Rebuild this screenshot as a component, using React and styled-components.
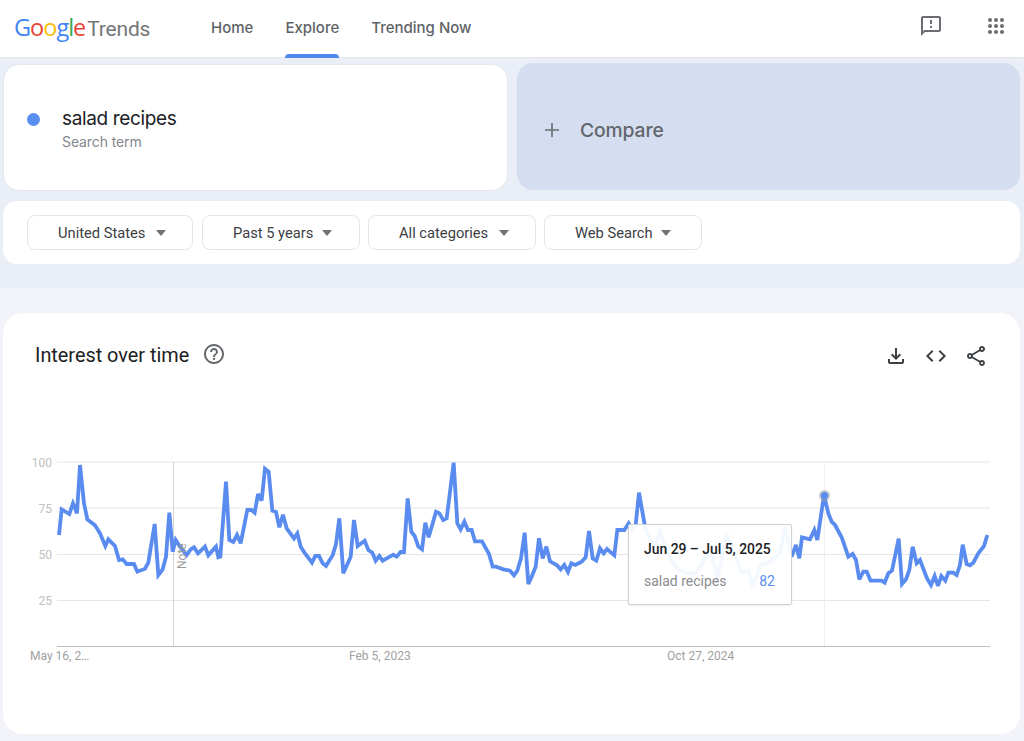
import React from "react";
import styled, { createGlobalStyle } from "styled-components";

const Global = createGlobalStyle`
  html, body { margin: 0; padding: 0; background: #f1f3f9; }
  body { font-family: "Roboto", "Liberation Sans", sans-serif; width: 1024px; height: 741px; overflow: hidden; }
  * { box-sizing: border-box; }
`;

const Page = styled.div`
  width: 1024px;
  height: 741px;
  display: flex;
  flex-direction: column;
  overflow: hidden;
`;

const Header = styled.header`
  height: 58px;
  flex: none;
  background: #fff;
  border-bottom: 1px solid #e3e5ea;
  display: flex;
  align-items: stretch;
  padding: 0 16px 0 14px;
`;

const Logo = styled.div`
  display: flex;
  align-items: baseline;
  width: 197px;
  padding-top: 13px;
  font-family: "Open Sans", sans-serif;
  font-size: 23.5px;
  line-height: 28px;
  letter-spacing: -1px;
`;

const LogoLetter = styled.span`
  color: ${(p) => p.$c};
`;

const LogoWord = styled.span`
  color: #737678;
  font-family: "Roboto", sans-serif;
  font-size: 21px;
  letter-spacing: -0.2px;
  margin-left: 2px;
`;

const Nav = styled.nav`
  display: flex;
  gap: 32px;
  flex: 1;
`;

const NavItem = styled.a`
  position: relative;
  display: block;
  padding-top: 19px;
  font-family: "Inter", sans-serif;
  font-size: 15px;
  line-height: 18px;
  letter-spacing: 0;
  color: #5f6368;
  font-weight: 500;
  ${(p) =>
    p.$active &&
    `&::after {
      content: "";
      position: absolute;
      left: 0; right: 0; bottom: -1px;
      height: 4px;
      border-radius: 4px 4px 0 0;
      background: #4f86ec;
    }`}
`;

const HeaderIcons = styled.div`
  display: flex;
  align-items: flex-start;
  padding-top: 14px;
  gap: 41px;
`;

const TopBand = styled.section`
  flex: none;
  height: 230px;
  background: #eaeef7;
  padding: 5px 4px 0 3px;
  display: flex;
  flex-direction: column;
  gap: 10px;
`;

const SearchRow = styled.div`
  display: grid;
  grid-template-columns: 505px 503px;
  gap: 9px;
  height: 128px;
`;

const TermCard = styled.div`
  background: #fff;
  border-radius: 16px;
  border: 1px solid #e4e7ee;
  margin-top: 1px;
  display: flex;
  align-items: center;
  padding: 2px 0 0 23px;
  gap: 22px;
`;

const TermDot = styled.span`
  width: 13px;
  height: 13px;
  border-radius: 50%;
  background: #5a8ff2;
  flex: none;
  margin-bottom: 18px;
`;

const TermText = styled.div`
  display: flex;
  flex-direction: column;
  gap: 2px;
`;

const TermTitle = styled.div`
  font-family: "Inter", sans-serif;
  font-size: 19px;
  line-height: 24px;
  letter-spacing: -0.35px;
  color: #202124;
`;

const TermSub = styled.div`
  font-family: "Inter", sans-serif;
  font-size: 14px;
  line-height: 18px;
  letter-spacing: -0.1px;
  color: #85888c;
`;

const CompareCard = styled.div`
  background: #d5ddf0;
  border-radius: 16px;
  margin-bottom: 1px;
  display: flex;
  align-items: center;
  padding: 7px 0 0 27px;
  gap: 20px;
  color: #62666b;
  font-family: "Inter", sans-serif;
  font-size: 19.3px;
  letter-spacing: -0.1px;
  font-weight: 500;
`;

const FilterCard = styled.div`
  height: 63px;
  background: #fff;
  border-radius: 14px;
  display: flex;
  align-items: flex-start;
  padding: 14px 0 0 24px;
  gap: 8px;
`;

const Chip = styled.div`
  width: ${(p) => p.$w}px;
  height: 35px;
  border: 1px solid #e3e5e9;
  border-radius: 8px;
  display: flex;
  align-items: center;
  padding-left: 30px;
  gap: ${(p) => p.$gap}px;
  font-family: "Roboto", sans-serif;
  font-size: 14.7px;
  color: #3c4043;
  &:first-child {
    margin-right: 1px;
  }
`;

const Caret = styled.span`
  width: 0;
  height: 0;
  border-left: 5px solid transparent;
  border-right: 5px solid transparent;
  border-top: 6px solid #6f7276;
`;

const Lower = styled.section`
  flex: 1;
  background: #f1f3f9;
  padding: 25px 4px 0 3px;
`;

const ChartCard = styled.article`
  position: relative;
  height: 421px;
  background: #fff;
  border-radius: 20px;
`;

const CardHead = styled.div`
  height: 127px;
  display: flex;
  align-items: flex-start;
  padding: 29px 32px 0 32px;
`;

const CardTitle = styled.h2`
  margin: 0;
  font-family: "Roboto", sans-serif;
  font-weight: 400;
  font-size: 19.85px;
  line-height: 28px;
  color: #202124;
`;

const HelpWrap = styled.span`
  display: flex;
  margin: 0 0 0 13px;
`;

const Actions = styled.div`
  margin-left: auto;
  display: flex;
  gap: 16px;
  padding-top: 2px;
`;

const ChartSvg = styled.svg`
  display: block;
`;

const Tip = styled.div`
  position: absolute;
  left: 625px;
  top: 211px;
  width: 164px;
  height: 81px;
  background: rgba(255, 255, 255, 0.93);
  border: 1px solid #cfd0d2;
  border-radius: 2px;
  box-shadow: 0 1px 2px rgba(0, 0, 0, 0.08);
  padding: 15px 16px 0 15px;
  font-family: "Roboto", sans-serif;
`;

const TipDate = styled.div`
  font-size: 13.9px;
  line-height: 18px;
  font-weight: 500;
  color: #202124;
`;

const TipRow = styled.div`
  margin-top: 14px;
  display: flex;
  justify-content: space-between;
  font-size: 14px;
  line-height: 18px;
  color: #8a8c8f;
`;

const TipValue = styled.span`
  color: #5a8ff2;
`;

const Icon = ({ d, size = 24, color = "#5f6368" }) => (
  <svg width={size} height={size} viewBox="0 0 24 24" fill={color}>
    <path d={d} />
  </svg>
);

const Apps = () => (
  <svg width="24" height="24" viewBox="0 0 24 24" fill="#6a6d71">
    {[6, 12, 18].flatMap((y) =>
      [6, 12, 18].map((x) => <circle key={x + "-" + y} cx={x} cy={y} r="2" />)
    )}
  </svg>
);

const P = {
  feedback: "M20 2H4c-1.1 0-1.99.9-1.99 2L2 22l4-4h14c1.1 0 2-.9 2-2V4c0-1.1-.9-2-2-2zm0 14H5.17L4 17.17V4h16v12zM11 12h2v2h-2zm0-6h2v4h-2z",
  down: "M18 15v3H6v-3H4v3c0 1.1.9 2 2 2h12c1.1 0 2-.9 2-2v-3h-2zm-1-4l-1.41-1.41L13 12.17V4h-2v8.17L8.41 9.59 7 11l5 5 5-5z",
  code: "M9.4 16.6L4.8 12l4.6-4.6L8 6l-6 6 6 6 1.4-1.4zm5.2 0l4.6-4.6-4.6-4.6L16 6l6 6-6 6-1.4-1.4z",
  share: "M18 16.08c-.76 0-1.44.3-1.96.77L8.91 12.7c.05-.23.09-.46.09-.7s-.04-.47-.09-.7l7.05-4.11c.54.5 1.25.81 2.04.81 1.66 0 3-1.34 3-3s-1.34-3-3-3-3 1.34-3 3c0 .24.04.47.09.7L8.04 9.81C7.5 9.31 6.79 9 6 9c-1.66 0-3 1.34-3 3s1.34 3 3 3c.79 0 1.5-.31 2.04-.81l7.12 4.16c-.05.21-.08.43-.08.65 0 1.61 1.31 2.92 2.92 2.92s2.92-1.31 2.92-2.92-1.31-2.92-2.92-2.92zM18 4c.55 0 1 .45 1 1s-.45 1-1 1-1-.45-1-1 .45-1 1-1zM6 13c-.55 0-1-.45-1-1s.45-1 1-1 1 .45 1 1-.45 1-1 1zm12 7.02c-.55 0-1-.45-1-1s.45-1 1-1 1 .45 1 1-.45 1-1 1z",
  help: "M11 18h2v-2h-2v2zm1-16C6.48 2 2 6.48 2 12s4.48 10 10 10 10-4.48 10-10S17.52 2 12 2zm0 18c-4.41 0-8-3.59-8-8s3.59-8 8-8 8 3.59 8 8-3.59 8-8 8zm0-14c-2.21 0-4 1.79-4 4h2c0-1.1.9-2 2-2s2 .9 2 2c0 2-3 1.75-3 5h2c0-2.25 3-2.5 3-5 0-2.21-1.79-4-4-4z",
};

const seg = (ox, oy, pts) => pts.map(([x, y]) => [ox + x / 3, oy + y / 3]);

const line = [
  ...seg(0, 450, [[177,255],[185,178],[208,192],[219,160],[231,190],[240,45],[252,160],[262,208],[285,226],[300,250],[316,288],[325,268],[345,288],[357,330],[368,328],[380,342],[402,342],[412,365],[435,356],[445,338],[464,222],[475,375],[488,358],[498,320],[508,188],[518,305],[527,270],[540,290],[560,315],[572,298],[582,292],[594,310],[615,290],[625,316],[648,290],[655,322],[661,320],[678,95],[688,270],[700,276],[711,255],[722,280],[742,180],[754,180],[764,188],[774,132],[785,152],[795,56],[806,65],[817,182],[828,186],[838,232],[849,194],[860,235],[882,265],[892,250],[902,290],[915,310],[936,338],[946,318],[957,318],[968,340],[978,348],[998,316],[1008,282],[1018,205]]),
  ...seg(340, 450, [[10,370],[32,320],[42,210],[53,288],[74,272],[85,300],[97,308],[107,332],[118,318],[128,332],[160,314],[170,320],[182,306],[192,306],[203,145],[214,245],[224,258],[235,290],[246,298],[256,218],[266,262],[288,185],[298,190],[310,210],[320,205],[341,38],[352,220],[362,238],[373,215],[384,240],[395,240],[405,274],[426,274],[447,312],[458,350],[468,350],[490,358],[510,362],[522,376],[532,362],[543,325],[554,248],[565,402],[575,380],[587,350],[597,265],[608,325],[619,290],[630,334],[650,345],[662,358],[673,345],[684,366],[694,340],[706,345],[725,335],[737,322],[747,243],[758,325],[769,332],[780,295],[791,310],[801,297],[823,316],[832,240],[853,240],[866,220],[877,240],[887,225],[897,128]]),
  ...seg(620, 510, [[75,50],[90,90],[105,105],[120,65],[135,110],[155,150],[170,175],[200,190],[225,190],[245,165],[260,130],[275,135],[292,205],[320,70],[345,140],[365,185],[385,180],[400,232],[420,165],[450,155],[480,130],[495,50],[515,140]]),
  ...seg(680, 450, [[348,285],[358,325],[366,262],[390,268],[403,240],[412,270],[432,135],[445,190],[455,215],[465,225],[485,262],[505,320],[518,312],[528,330],[538,388],[550,365],[560,365],[572,392],[605,392],[614,398],[625,370],[636,362],[656,266],[666,402],[678,388],[688,360],[698,290],[710,340],[720,330],[741,385],[753,405],[764,378],[774,408],[784,378],[796,392],[805,368],[820,368],[830,375],[840,345],[848,284],[860,342],[870,346],[880,338],[895,310],[912,288],[922,255]]),
];

const grid = [[462, "100"], [508, "75"], [554.5, "50"], [600.5, "25"]];

const google = [["G", "#4285f4"], ["o", "#ea4335"], ["o", "#fbbc05"], ["g", "#4285f4"], ["l", "#34a853"], ["e", "#ea4335"]];

const chips = [["United States", 166, 11], ["Past 5 years", 158, 9], ["All categories", 168, 11], ["Web Search", 158, 8]];

export default function App() {
  return (
    <Page>
      <Global />
      <Header>
        <Logo>
          {google.map(([l, c], i) => (
            <LogoLetter key={i} $c={c}>{l}</LogoLetter>
          ))}
          <LogoWord>Trends</LogoWord>
        </Logo>
        <Nav>
          <NavItem>Home</NavItem>
          <NavItem $active>Explore</NavItem>
          <NavItem>Trending Now</NavItem>
        </Nav>
        <HeaderIcons>
          <Icon d={P.feedback} color="#6a6d71" />
          <Apps />
        </HeaderIcons>
      </Header>
      <TopBand>
        <SearchRow>
          <TermCard>
            <TermDot />
            <TermText>
              <TermTitle>salad recipes</TermTitle>
              <TermSub>Search term</TermSub>
            </TermText>
          </TermCard>
          <CompareCard>
            <svg width="16" height="16" viewBox="0 0 16 16" stroke="#6a6e73" strokeWidth="1.6">
              <path d="M8 1v14M1 8h14" />
            </svg>
            Compare
          </CompareCard>
        </SearchRow>
        <FilterCard>
          {chips.map(([t, w, g]) => (
            <Chip key={t} $w={w} $gap={g}>
              {t}
              <Caret />
            </Chip>
          ))}
        </FilterCard>
      </TopBand>
      <Lower>
        <ChartCard>
          <CardHead>
            <CardTitle>Interest over time</CardTitle>
            <HelpWrap><Icon d={P.help} color="#66696d" /></HelpWrap>
            <Actions>
              <Icon d={P.down} color="#3c4043" />
              <Icon d={P.code} color="#3c4043" />
              <Icon d={P.share} color="#3c4043" />
            </Actions>
          </CardHead>
          <ChartSvg width="1017" height="294" viewBox="3 440 1017 294">
            {grid.map(([y, t]) => (
              <g key={t}>
                <line x1="57" x2="990" y1={y} y2={y} stroke="#e6e6e6" strokeWidth="1.2" />
                <text x="52" y={y + 4.5} textAnchor="end" fontFamily="Roboto, sans-serif" fontSize="12" fill="#c0c0c0">{t}</text>
              </g>
            ))}
            <line x1="57" x2="990" y1="646.5" y2="646.5" stroke="#bdbdbd" strokeWidth="1.2" />
            <line x1="173.5" x2="173.5" y1="462" y2="646" stroke="#d4d4d4" strokeWidth="1" />
            <line x1="824.5" x2="824.5" y1="462" y2="646" stroke="#f0f0f0" strokeWidth="1" />
            <polyline points={line.map((p) => p.join(",")).join(" ")} fill="none" stroke="#5a8cf0" strokeWidth="3.8" strokeLinejoin="miter" strokeMiterlimit="3" />
            <text transform="translate(186 569) rotate(-90)" fontFamily="Roboto, sans-serif" fontSize="12" fill="#9a9a9a">Note</text>
            <circle cx="824.5" cy="495.5" r="5.5" fill="#9e9e9e" opacity="0.55" />
            <circle cx="824.5" cy="495.5" r="3.6" fill="#5a8cf0" />
            <g fontFamily="Roboto, sans-serif" fontSize="12" fill="#a0a0a0">
              <text x="30" y="659.5">May 16, 2…</text>
              <text x="349" y="659.5">Feb 5, 2023</text>
              <text x="667" y="659.5">Oct 27, 2024</text>
            </g>
          </ChartSvg>
          <Tip>
            <TipDate>Jun 29 – Jul 5, 2025</TipDate>
            <TipRow>
              <span>salad recipes</span>
              <TipValue>82</TipValue>
            </TipRow>
          </Tip>
        </ChartCard>
      </Lower>
    </Page>
  );
}
